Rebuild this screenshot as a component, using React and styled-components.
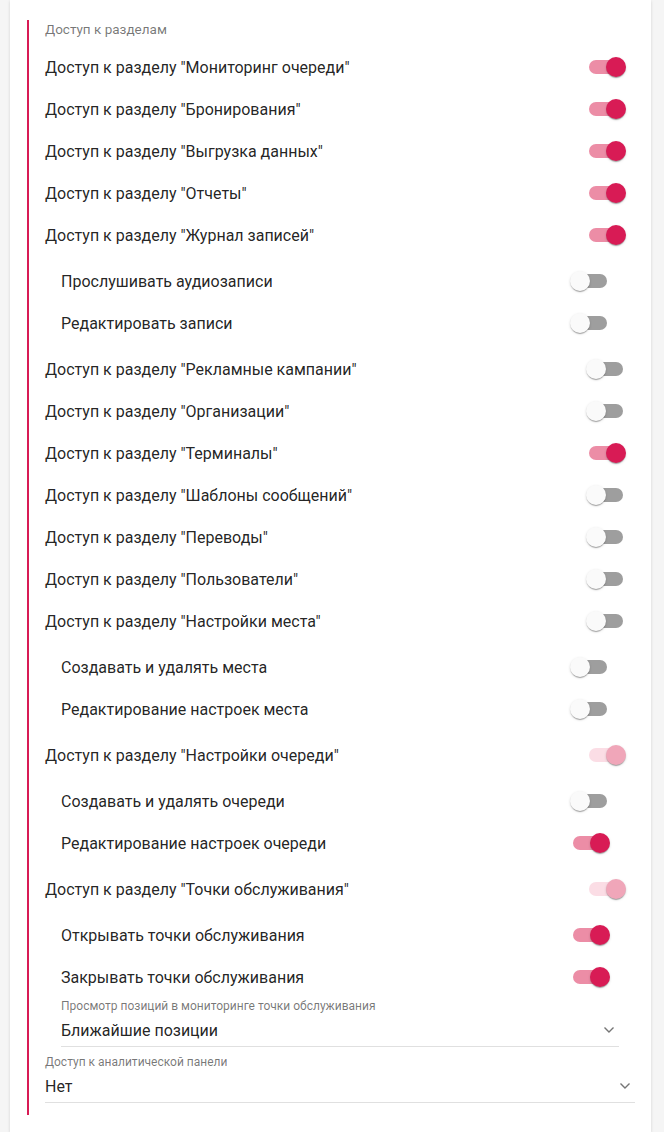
import React from "react";
import styled, { createGlobalStyle } from "styled-components";

const Global = createGlobalStyle`
  body {
    margin: 0;
    background: #f5f5f5;
    font-family: Roboto, "Noto Sans", sans-serif;
  }
`;

const Card = styled.div`
  margin-left: 10px;
  width: 641px;
  min-height: 100vh;
  box-sizing: border-box;
  background: #fff;
  box-shadow: 0 1px 3px rgba(0, 0, 0, 0.14);
  padding: 20px 16px 17px 17px;
`;

const Section = styled.div`
  border-left: 2px solid #d81b55;
  padding: 0 0 12px 16px;
`;

const Legend = styled.div`
  height: 18px;
  line-height: 18px;
  font-size: 13.5px;
  color: rgba(0, 0, 0, 0.54);
  margin-bottom: 8px;
`;

const Row = styled.div`
  height: 42px;
  display: flex;
  align-items: center;
  justify-content: space-between;
  font-size: 16px;
  color: rgba(0, 0, 0, 0.87);
`;

const Nested = styled.div`
  padding: 4px 16px;
`;

const Track = styled.span`
  position: relative;
  display: block;
  width: 34px;
  height: 14px;
  border-radius: 7px;
  margin-right: 12px;
  background: ${(p) =>
    !p.$on ? "#9e9e9e" : p.$disabled ? "#fbdde5" : "#ec8da6"};
`;

const Thumb = styled.span`
  position: absolute;
  top: -3px;
  left: ${(p) => (p.$on ? "17px" : "-3px")};
  width: 20px;
  height: 20px;
  border-radius: 50%;
  background: ${(p) =>
    !p.$on ? "#fafafa" : p.$disabled ? "#f0a6b9" : "#d81b55"};
  box-shadow: 0 2px 1px -1px rgba(0, 0, 0, 0.2), 0 1px 1px rgba(0, 0, 0, 0.14),
    0 1px 3px rgba(0, 0, 0, 0.12);
`;

const Field = styled.div`
  margin-top: ${(p) => p.$gap || 0}px;
`;

const FieldLabel = styled.div`
  height: 16px;
  line-height: 16px;
  font-size: 12px;
  color: rgba(0, 0, 0, 0.54);
`;

const SelectBox = styled.div`
  height: 32px;
  display: flex;
  align-items: center;
  justify-content: space-between;
  border-bottom: 1px solid #e0e0e0;
  font-size: 16px;
  color: rgba(0, 0, 0, 0.87);
  padding-right: 4px;
`;

function Switch({ on, disabled }) {
  return (
    <Track $on={on} $disabled={disabled}>
      <Thumb $on={on} $disabled={disabled} />
    </Track>
  );
}

function Chevron() {
  return (
    <svg width="12" height="8" viewBox="0 0 12 8">
      <path d="M1.5 1.5 L6 6 L10.5 1.5" fill="none" stroke="#757575" strokeWidth="1.4" />
    </svg>
  );
}

function Toggle({ label, on, disabled }) {
  return (
    <Row>
      <span>{label}</span>
      <Switch on={on} disabled={disabled} />
    </Row>
  );
}

function Select({ label, value, gap }) {
  return (
    <Field $gap={gap}>
      <FieldLabel>{label}</FieldLabel>
      <SelectBox>
        <span>{value}</span>
        <Chevron />
      </SelectBox>
    </Field>
  );
}

export default function App() {
  return (
    <>
      <Global />
      <Card>
        <Section>
          <Legend>Доступ к разделам</Legend>
          <Toggle label='Доступ к разделу "Мониторинг очереди"' on />
          <Toggle label='Доступ к разделу "Бронирования"' on />
          <Toggle label='Доступ к разделу "Выгрузка данных"' on />
          <Toggle label='Доступ к разделу "Отчеты"' on />
          <Toggle label='Доступ к разделу "Журнал записей"' on />
          <Nested>
            <Toggle label="Прослушивать аудиозаписи" />
            <Toggle label="Редактировать записи" />
          </Nested>
          <Toggle label='Доступ к разделу "Рекламные кампании"' />
          <Toggle label='Доступ к разделу "Организации"' />
          <Toggle label='Доступ к разделу "Терминалы"' on />
          <Toggle label='Доступ к разделу "Шаблоны сообщений"' />
          <Toggle label='Доступ к разделу "Переводы"' />
          <Toggle label='Доступ к разделу "Пользователи"' />
          <Toggle label='Доступ к разделу "Настройки места"' />
          <Nested>
            <Toggle label="Создавать и удалять места" />
            <Toggle label="Редактирование настроек места" />
          </Nested>
          <Toggle label='Доступ к разделу "Настройки очереди"' on disabled />
          <Nested>
            <Toggle label="Создавать и удалять очереди" />
            <Toggle label="Редактирование настроек очереди" on />
          </Nested>
          <Toggle label='Доступ к разделу "Точки обслуживания"' on disabled />
          <Nested>
            <Toggle label="Открывать точки обслуживания" on />
            <Toggle label="Закрывать точки обслуживания" on />
            <Select
              label="Просмотр позиций в мониторинге точки обслуживания"
              value="Ближайшие позиции"
            />
          </Nested>
          <Select label="Доступ к аналитической панели" value="Нет" gap={3} />
        </Section>
      </Card>
    </>
  );
}
